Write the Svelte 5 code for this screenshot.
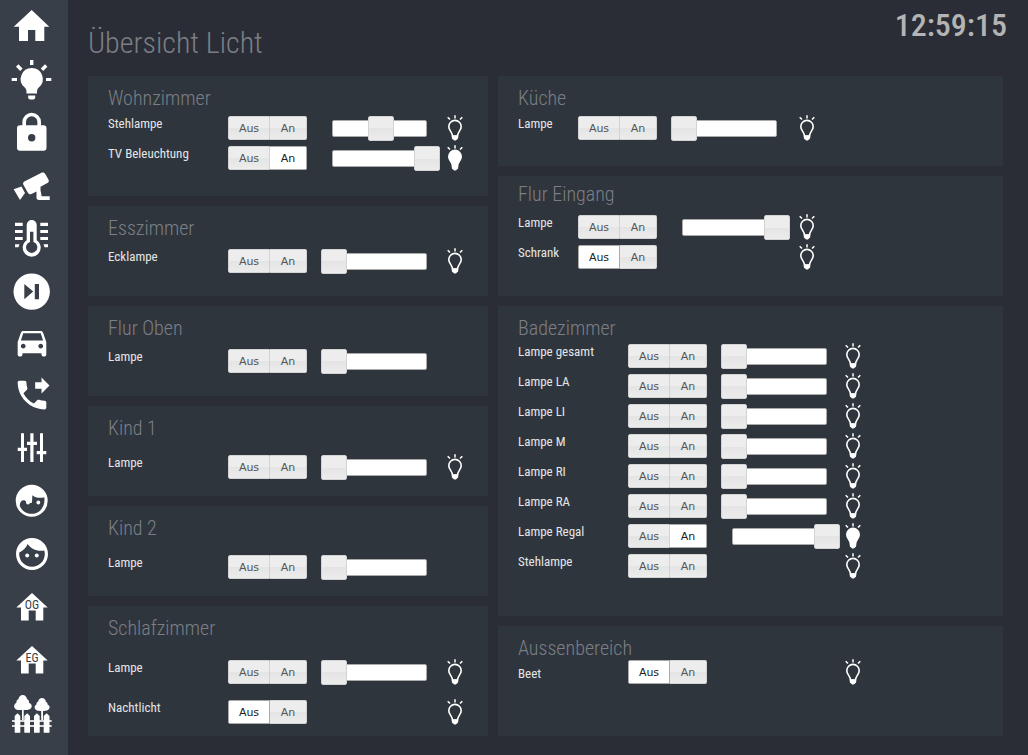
<script lang="ts">
  type Lamp = {
    name: string;
    state?: 'Aus' | 'An';
    level?: number;
    bulb?: 'off' | 'on';
  };
  type Room = { name: string; layout: string; lamps: Lamp[] };

  const states = ['Aus', 'An'] as const;
  const time = '12:59:15';

  let columns = $state<Room[][]>([
    [
      {
        name: 'Wohnzimmer',
        layout: 'close',
        lamps: [
          { name: 'Stehlampe', level: 50, bulb: 'off' },
          { name: 'TV Beleuchtung', state: 'An', level: 100, bulb: 'on' }
        ]
      },
      { name: 'Esszimmer', layout: 'normal', lamps: [{ name: 'Ecklampe', level: 0, bulb: 'off' }] },
      { name: 'Flur Oben', layout: 'normal', lamps: [{ name: 'Lampe', level: 0 }] },
      { name: 'Kind 1', layout: 'loose', lamps: [{ name: 'Lampe', level: 0, bulb: 'off' }] },
      { name: 'Kind 2', layout: 'loose', lamps: [{ name: 'Lampe', level: 0 }] },
      {
        name: 'Schlafzimmer',
        layout: 'spread',
        lamps: [
          { name: 'Lampe', level: 0, bulb: 'off' },
          { name: 'Nachtlicht', state: 'Aus', bulb: 'off' }
        ]
      }
    ],
    [
      { name: 'Küche', layout: 'close narrow', lamps: [{ name: 'Lampe', level: 0, bulb: 'off' }] },
      {
        name: 'Flur Eingang',
        layout: 'raised narrow',
        lamps: [
          { name: 'Lampe', level: 100, bulb: 'off' },
          { name: 'Schrank', state: 'Aus', bulb: 'off' }
        ]
      },
      {
        name: 'Badezimmer',
        layout: 'dense medium',
        lamps: [
          { name: 'Lampe gesamt', level: 0, bulb: 'off' },
          { name: 'Lampe LA', level: 0, bulb: 'off' },
          { name: 'Lampe LI', level: 0, bulb: 'off' },
          { name: 'Lampe M', level: 0, bulb: 'off' },
          { name: 'Lampe RI', level: 0, bulb: 'off' },
          { name: 'Lampe RA', level: 0, bulb: 'off' },
          { name: 'Lampe Regal', state: 'An', level: 100, bulb: 'on' },
          { name: 'Stehlampe', bulb: 'off' }
        ]
      },
      { name: 'Aussenbereich', layout: 'flush medium', lamps: [{ name: 'Beet', state: 'Aus', bulb: 'off' }] }
    ]
  ]);
</script>

{#snippet floorHouse(text: string)}
  <svg viewBox="0 0 42 42" aria-hidden="true">
    <path d="M21 5 36.7 19.5H32.3V32.5H24.7V22.5H17.7V32.5H10V19.5H5.3Z" />
    <text x="21" y="21" text-anchor="middle">{text}</text>
  </svg>
{/snippet}

<div class="app">
  <nav class="sidebar" aria-label="Hauptmenü">
    <a href="#start" aria-label="Start">
      <svg viewBox="0 0 42 42" aria-hidden="true">
        <path d="M20.7 5 38.3 21.7H33.3V36H24.3V25H17V36H8V21.7H2.7Z" />
      </svg>
    </a>
    <a href="#licht" aria-label="Licht" aria-current="page">
      <svg viewBox="0 0 42 42" aria-hidden="true">
        <path d="M20.7 10a11 11 0 0 0-7.2 19.3c1.4 1.4 2 2.6 2 4.4V35.5H26V33.7c0-1.8.6-3 2-4.4A11 11 0 0 0 20.7 10Z" />
        <path d="M17.2 37.500h7v2a2 2 0 0 1-2 2h-3a2 2 0 0 1-2-2Z" />
        <path d="M19 2h3.400v5H19ZM.7 20H6v3H.7ZM35 20h5.300v3H35ZM5 8.700 7.400 6.300 11.600 10.500 9.200 12.900ZM36.400 8.700 34 6.300 29.800 10.500 32.200 12.900Z" />
      </svg>
    </a>
    <a href="#schloss" aria-label="Türschloss">
      <svg viewBox="0 0 42 42" aria-hidden="true">
        <path class="line" d="M13.200 16V11a7.500 7.500 0 0 1 15 0V16" stroke-width="3.600" />
        <path fill-rule="evenodd" d="M9 14.300H32.500a3 3 0 0 1 3 3V36.700a3 3 0 0 1-3 3H9a3 3 0 0 1-3-3V17.300a3 3 0 0 1 3-3ZM20.700 23a3.700 3.700 0 1 0 0 7.400 3.700 3.700 0 0 0 0-7.400Z" />
      </svg>
    </a>
    <a href="#kamera" aria-label="Kamera">
      <svg viewBox="0 0 42 42" aria-hidden="true">
        <path d="M13.300 17.500 30 9c2-.9 3.400-.5 4.400 1.200l3 5.300c.8 1.500.4 2.800-1 3.600L29.500 22.800V26C29.500 28 30.500 28.500 30.500 32.300H38.700V36H28c-1.800 0-2.500-.9-2.500-2.500V27.500L21.500 29.600c-2 1-3.700.6-4.800-1.200L12.500 21c-.7-1.500-.5-2.700.8-3.500Z" />
        <path d="M2.700 25.300 10.500 22.500 14 29 9 36Z" />
      </svg>
    </a>
    <a href="#heizung" aria-label="Heizung">
      <svg viewBox="0 0 42 42" aria-hidden="true">
        <path fill-rule="evenodd" d="M15.700 8a5 5 0 0 1 10 0V23.200a9 9 0 1 1-10 0ZM19 14.700V25a5.600 5.600 0 1 0 3.400 0V14.700Z" />
        <path d="M4 5.700h7.700V9H4ZM4 13h7.700v3H4ZM4 20h7.700v3H4ZM4 27.300H8.500L7.500 30.300H4ZM29.300 5.700H37V9H29.300ZM29.300 13H37v3H29.300ZM29.300 20H37v3H29.300ZM32.500 27.300H37v3H33.500Z" />
      </svg>
    </a>
    <a href="#medien" aria-label="Medien">
      <svg viewBox="0 0 42 42" aria-hidden="true">
        <path fill-rule="evenodd" d="M20.700 3.400a18.200 18.200 0 1 0 0 36.400 18.200 18.200 0 0 0 0-36.400ZM13.300 14 22.200 21.600 13.300 29.200ZM23.800 14H28V29.200H23.800Z" />
      </svg>
    </a>
    <a href="#auto" aria-label="Auto">
      <svg viewBox="0 0 42 42" aria-hidden="true">
        <path
          transform="translate(1.9 0) scale(1.59)"
          d="M18.92 6.01C18.72 5.42 18.16 5 17.5 5h-11c-.66 0-1.21.42-1.42 1.01L3 12v8c0 .55.45 1 1 1h1c.55 0 1-.45 1-1v-1h12v1c0 .55.45 1 1 1h1c.55 0 1-.45 1-1v-8l-2.08-5.99zM6.5 16c-.83 0-1.5-.67-1.5-1.5S5.67 13 6.5 13s1.5.67 1.5 1.5S7.33 16 6.5 16zm11 0c-.83 0-1.5-.67-1.5-1.5s.67-1.5 1.5-1.5 1.5.67 1.5 1.5-.67 1.5-1.5 1.5zM5 11l1.5-4.5h11L19 11H5z"
        />
      </svg>
    </a>
    <a href="#telefon" aria-label="Telefon">
      <svg viewBox="0 0 42 42" aria-hidden="true">
        <path
          transform="translate(1.9 0) scale(1.59)"
          d="M18 11l5-5-5-5v3h-4v4h4v3zm2 4.500c-1.250 0-2.450-.2-3.570-.57-.35-.11-.74-.03-1.020.24l-2.200 2.200c-2.830-1.440-5.150-3.750-6.590-6.590l2.200-2.210c.28-.26.36-.65.25-1C8.700 6.450 8.500 5.250 8.500 4c0-.55-.45-1-1-1H4c-.55 0-1 .45-1 1 0 9.390 7.610 17 17 17 .55 0 1-.45 1-1v-3.500c0-.55-.45-1-1-1z"
        />
      </svg>
    </a>
    <a href="#einstellungen" aria-label="Einstellungen">
      <svg viewBox="0 0 42 42" aria-hidden="true">
        <path d="M10 4.300h3V18.700h3V22H13V33H10V22H6.700V18.700H10ZM19.300 4.300h3.200v8.400H26V16H22.500V33H19.300V16H16V12.700h3.300ZM29 4.300h3V22h3.300v3.200H32V33H29V25.200H25.700V22H29Z" />
      </svg>
    </a>
    <a href="#kind1" aria-label="Kind 1">
      <svg viewBox="0 0 42 42" aria-hidden="true">
        <path fill-rule="evenodd" d="M20.700 2.800a16 16 0 1 0 0 32 16 16 0 0 0 0-32ZM21.300 13.300c3.700 2.800 7.700 3 12 1.900 1.300 9-4.300 16.600-12.600 16.600-5.500 0-10-3-12-8 .2-3.800 2-5.500 4-5.500 1 0 1.600.5 2.300 1.200v1.500h5.800c.4-2.500.5-5 .5-7.700Z" />
        <circle cx="17" cy="20.5" r="1.900" />
        <circle cx="27.300" cy="20.500" r="1.900" />
      </svg>
    </a>
    <a href="#kind2" aria-label="Kind 2">
      <svg viewBox="0 0 42 42" aria-hidden="true">
        <path
          transform="translate(1.8 -0.2) scale(1.6)"
          d="M9 11.750c-.69 0-1.250.56-1.250 1.250s.56 1.250 1.250 1.250 1.250-.56 1.250-1.250-.56-1.250-1.250-1.250zm6 0c-.69 0-1.250.56-1.250 1.250s.56 1.250 1.250 1.250 1.250-.56 1.250-1.250-.56-1.250-1.250-1.250zM12 2C6.480 2 2 6.480 2 12s4.480 10 10 10 10-4.480 10-10S17.520 2 12 2zm0 18c-4.410 0-8-3.590-8-8 0-.29.02-.58.05-.86 2.360-1.050 4.230-2.980 5.210-5.370C11.070 8.330 14.050 10 17.420 10c.78 0 1.530-.09 2.250-.26.21.71.33 1.470.33 2.260 0 4.410-3.590 8-8 8z"
        />
      </svg>
    </a>
    <a href="#og" aria-label="Obergeschoss">{@render floorHouse('OG')}</a>
    <a href="#eg" aria-label="Erdgeschoss">{@render floorHouse('EG')}</a>
    <a href="#garten" aria-label="Garten">
      <svg viewBox="0 0 42 42" aria-hidden="true">
        <path d="M11.700 1c2.300 0 4 1.800 4.300 3.900 1.700.8 2.300 2.300 2 3.800 2.700 1.200 3.300 3.200 2.300 5-1.300 2.200-4.300 2.500-7.600 2.300V26H11V16c-3.500.2-6.300 0-7.500-2.300-.9-1.800-.2-3.800 1.900-5C5.200 7 6 5.700 7.500 4.900 7.800 2.800 9.500 1 11.700 1Z" />
        <path d="M31 4c2 0 3.500 1.500 3.800 3.400 1.400.7 2 2 1.700 3.200 2 1 2.500 2.600 1.700 4.100-1 1.900-3.500 2.300-6.200 2.200V26H30.200V16.900c-2.900.1-5.300-.2-6.300-2.200-.7-1.500-.1-3.100 1.600-4.100-.2-1.400.4-2.500 1.700-3.200C27.500 5.500 29 4 31 4Z" />
        <path class="fence" d="M1 26H40.700V28H1ZM1 31H40.700V33H1Z" />
        <path d="M3.700 38.700V22L6.500 19.300 9.300 22V38.700ZM13.300 38.700V22L16.200 19.300 19 22V38.700ZM23 38.700V22L25.900 19.300 28.700 22V38.700ZM32.700 38.700V22L35.600 19.300 38.500 22V38.700Z" />
      </svg>
    </a>
  </nav>

  <main>
    <header>
      <h1>Übersicht Licht</h1>
      <time>{time}</time>
    </header>

    <div class="rooms">
      {#each columns as rooms, c}
        <div class="column" class:column--right={c === 1}>
          {#each rooms as room, r}
            <section class="room {room.layout}">
              <h2>{room.name}</h2>
              {#each room.lamps as lamp, l}
                <div class="lamp">
                  <span class="lamp__name" id="lamp-{c}-{r}-{l}">{lamp.name}</span>
                  <div class="toggle" role="group" aria-labelledby="lamp-{c}-{r}-{l}">
                    {#each states as s}
                      <button type="button" aria-pressed={lamp.state === s} onclick={() => (lamp.state = s)}>{s}</button>
                    {/each}
                  </div>
                  {#if lamp.level !== undefined}
                    <div class="slider">
                      <input type="range" min="0" max="100" bind:value={lamp.level} aria-labelledby="lamp-{c}-{r}-{l}" />
                    </div>
                  {/if}
                  {#if lamp.bulb}
                    <svg class="bulb" class:bulb--on={lamp.bulb === 'on'} viewBox="0 0 18 26" role="img" aria-label={lamp.bulb === 'on' ? 'an' : 'aus'}>
                      <path class="bulb__rays" d="M9 .3V3.600M1.700 2.200 4 4.500M16.300 2.200 14 4.500" />
                      <path class="bulb__glass" d="M9 5.400a6.200 6.200 0 0 0-6.200 6.300c0 3.600 3.400 5.200 3.700 9.300h5c.3-4.100 3.700-5.700 3.700-9.300A6.200 6.200 0 0 0 9 5.400Z" />
                      <path class="bulb__base" d="M5.800 20.500h6.400v2c0 1.500-.8 1.700-1.400 2-.3.800-.9 1-1.800 1s-1.500-.2-1.800-1c-.6-.3-1.400-.5-1.400-2Z" />
                    </svg>
                  {/if}
                </div>
              {/each}
            </section>
          {/each}
        </div>
      {/each}
    </div>
  </main>
</div>

<style>
  :global(body) {
    background: #2a2d35;
  }

  .app {
    display: flex;
    min-height: 100vh;
    color: #e4e5e6;
    font-family: 'Roboto Condensed', Roboto, sans-serif;
  }

  .sidebar {
    flex: none;
    box-sizing: border-box;
    width: 68px;
    padding-right: 4px;
    background: #393f49;
  }

  .sidebar a {
    display: flex;
    justify-content: center;
    padding: 5px 0 6px;
  }

  .sidebar svg {
    width: 42px;
    height: 42px;
    fill: #fff;
  }

  .sidebar text {
    font-size: 12px;
    fill: #393f49;
  }

  .line {
    fill: none;
    stroke: #fff;
  }

  .fence {
    fill: #d5d7da;
  }

  main {
    flex: 1;
    min-width: 0;
    padding: 0 25px 19px 20px;
  }

  header {
    display: flex;
    justify-content: space-between;
    height: 76px;
  }

  h1 {
    margin: 25px 0 0;
    font-size: 30px;
    font-weight: 300;
    line-height: 36px;
    color: #7b7f85;
  }

  time {
    margin: 4px -4px 0 0;
    font-size: 32px;
    font-weight: 500;
    line-height: 42px;
    color: #b4b4b4;
  }

  .rooms {
    display: grid;
    grid-template-columns: 400fr 505fr;
    gap: 10px;
  }

  .column {
    display: grid;
    grid-template-rows: minmax(120px, auto) repeat(4, minmax(90px, auto)) minmax(130px, auto);
    gap: 10px;
  }

  .column--right {
    grid-template-rows: minmax(90px, auto) minmax(120px, auto) minmax(310px, auto) minmax(110px, auto);
  }

  .room {
    --name-width: 120px;
    --row-height: 30px;
    --bulb-gap: 19px;
    padding: 10px 20px 0;
    background: #2f353d;
  }

  h2 {
    margin: 0 0 3px;
    font-size: 20px;
    font-weight: 300;
    line-height: 24px;
    color: #7b7f85;
  }

  .normal h2,
  .raised h2 {
    margin-bottom: 6px;
  }

  .loose h2,
  .spread h2 {
    margin-bottom: 12px;
  }

  .dense h2 {
    margin-bottom: 1px;
  }

  .flush h2 {
    margin-bottom: -3px;
  }

  .raised {
    padding-top: 6px;
  }

  .spread {
    --row-height: 40px;
  }

  .narrow {
    --name-width: 60px;
    --bulb-gap: 21px;
  }

  .medium {
    --name-width: 110px;
    --bulb-gap: 17px;
  }

  .lamp {
    display: grid;
    grid-template-columns: var(--name-width) 104px 95px auto;
    align-items: center;
    height: var(--row-height);
  }

  .lamp__name {
    padding-bottom: 8px;
    font-size: 13px;
    line-height: 16px;
    white-space: nowrap;
  }

  .flush .lamp__name {
    padding: 4px 0 0;
  }

  .toggle {
    display: flex;
  }

  button {
    box-sizing: border-box;
    width: 37px;
    height: 24px;
    padding: 0;
    border: 1px solid #d3d3d3;
    border-left: 0;
    border-radius: 0 2px 2px 0;
    background: linear-gradient(#ededed 50%, #e4e4e4 50%, #ececec);
    color: #555;
    font: 11px 'DejaVu Sans', sans-serif;
    cursor: pointer;
  }

  button:first-child {
    width: 42px;
    border-left: 1px solid #d3d3d3;
    border-radius: 2px 0 0 2px;
  }

  button[aria-pressed='true'] {
    border-color: #aaa;
    background: #fff;
    color: #212121;
  }

  .slider {
    grid-column: 3;
    box-sizing: border-box;
    height: 17px;
    border: 1px solid #aaa;
    border-radius: 2px;
    background: #fff;
  }

  /* the handle hangs over both ends of the track */
  input {
    appearance: none;
    display: block;
    width: calc(100% + 26px);
    height: 25px;
    margin: -5px 0 0 -12px;
    background: transparent;
    cursor: pointer;
  }

  input::-webkit-slider-thumb {
    appearance: none;
    box-sizing: border-box;
    width: 26px;
    height: 25px;
    border: 1px solid #d3d3d3;
    border-radius: 2px;
    background: linear-gradient(#ededed 50%, #e4e4e4 50%, #ececec);
  }

  .bulb {
    grid-column: 4;
    width: 18px;
    height: 26px;
    margin-left: var(--bulb-gap);
    fill: none;
    stroke: #fff;
  }

  .bulb__rays {
    stroke-width: 1.5;
  }

  .bulb__glass {
    stroke-width: 1.6;
  }

  .bulb__base,
  .bulb--on .bulb__glass {
    fill: #fff;
  }

  .bulb__base {
    stroke: none;
  }
</style>
